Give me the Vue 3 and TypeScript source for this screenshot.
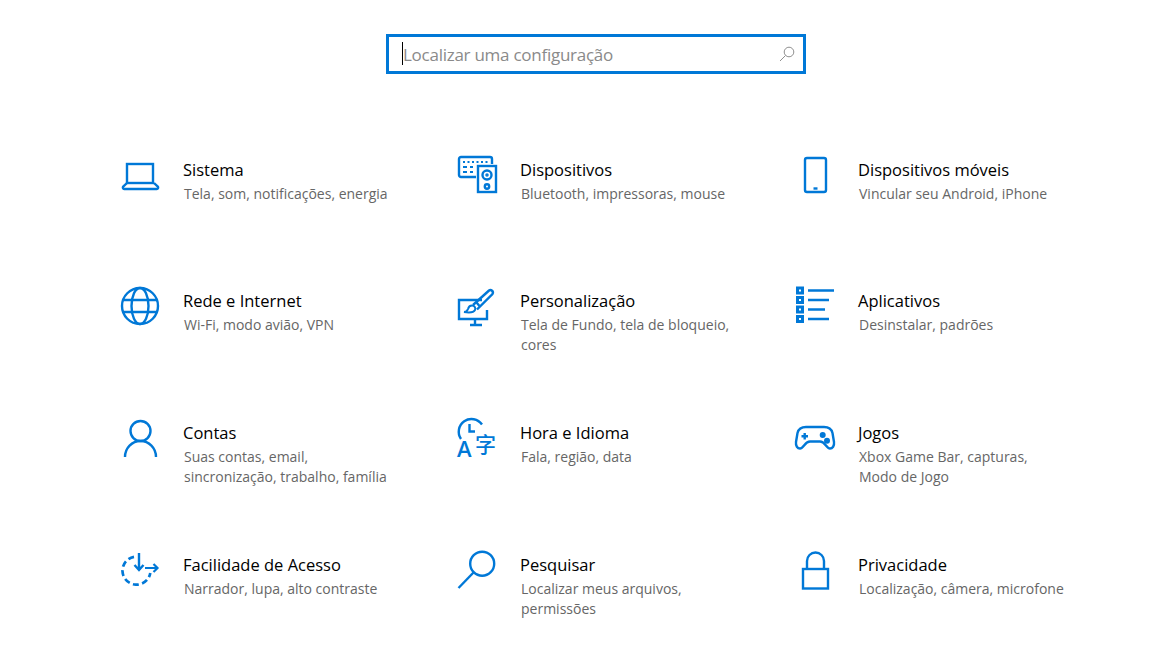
<script setup lang="ts">
interface Item { icon: string; title: string; desc: string[] }
const items: Item[] = [
  { icon: 'laptop', title: 'Sistema', desc: ['Tela, som, notificações, energia'] },
  { icon: 'devices', title: 'Dispositivos', desc: ['Bluetooth, impressoras, mouse'] },
  { icon: 'phone', title: 'Dispositivos móveis', desc: ['Vincular seu Android, iPhone'] },
  { icon: 'globe', title: 'Rede e Internet', desc: ['Wi-Fi, modo avião, VPN'] },
  { icon: 'paint', title: 'Personalização', desc: ['Tela de Fundo, tela de bloqueio,', 'cores'] },
  { icon: 'apps', title: 'Aplicativos', desc: ['Desinstalar, padrões'] },
  { icon: 'person', title: 'Contas', desc: ['Suas contas, email,', 'sincronização, trabalho, família'] },
  { icon: 'time', title: 'Hora e Idioma', desc: ['Fala, região, data'] },
  { icon: 'game', title: 'Jogos', desc: ['Xbox Game Bar, capturas,', 'Modo de Jogo'] },
  { icon: 'access', title: 'Facilidade de Acesso', desc: ['Narrador, lupa, alto contraste'] },
  { icon: 'search', title: 'Pesquisar', desc: ['Localizar meus arquivos,', 'permissões'] },
  { icon: 'lock', title: 'Privacidade', desc: ['Localização, câmera, microfone'] },
]
</script>

<template>
  <main class="page">
    <div class="search">
      <span class="caret"></span>
      <span class="placeholder">Localizar uma configuração</span>
      <svg class="search-icon" width="16" height="16" viewBox="0 0 16 16" fill="none" stroke="#8f8f8f" stroke-width="1">
        <circle cx="10" cy="6" r="4.8" />
        <path d="M6.5 9.5L1 15" />
      </svg>
    </div>
    <section class="grid">
      <article v-for="item in items" :key="item.title" class="item">
        <svg class="icon" width="46" height="46" viewBox="0 0 46 46" fill="none" stroke="#0078d7" stroke-width="2.4">
          <g v-if="item.icon === 'laptop'">
            <rect x="9" y="12" width="26" height="19" />
            <path d="M9 31L5.200 34.600C4.400 35.500 5 37 6.200 37H38.800C40 37 40.600 35.500 39.800 34.600L36 31" />
          </g>
          <g v-else-if="item.icon === 'devices'">
            <path d="M21 25H6a2 2 0 0 1-2-2V7a2 2 0 0 1 2-2H35a2 2 0 0 1 2 2V12" />
            <path d="M8 10h2M12.500 10h2M17 10h2M21.500 10h2M26 10h2M30.500 10h2M8 15h4M15 15h3M8 20h4M15 20h3" stroke-width="2" />
            <rect x="23" y="14" width="18" height="26" />
            <circle cx="32" cy="23" r="4.500" />
            <circle cx="32" cy="23" r="1" stroke-width="1.500" />
            <circle cx="32" cy="34.500" r="2.200" />
          </g>
          <g v-else-if="item.icon === 'phone'">
            <rect x="12" y="6" width="21" height="34" rx="2" />
            <path d="M20.500 36.500h4" />
          </g>
          <g v-else-if="item.icon === 'globe'" transform="translate(1 1)">
            <circle cx="21" cy="22" r="18" />
            <ellipse cx="21" cy="22" rx="8.500" ry="18" />
            <path d="M5 16H37M5 28H37" />
          </g>
          <g v-else-if="item.icon === 'paint'" transform="translate(0 1)">
            <path d="M27 16H4V35H32V26" />
            <path d="M20 35V41M15 41H27" />
            <path d="M9 28C12 28 12.500 26.500 13 25C13.500 23 15 21.500 17 21.500C19.500 21.500 21 24 20 26C19 28 15 29 9 28Z" stroke-width="2" />
            <path d="M18 21L34 6.500C36 5 39 7.500 37.500 10L22 25.500" />
            <path d="M21.500 18.500L24.500 22" />
          </g>
          <g v-else-if="item.icon === 'apps'" transform="translate(0 1)" stroke-width="3">
            <rect x="4.500" y="4" width="5" height="5" />
            <rect x="4.500" y="13.500" width="5" height="5" />
            <rect x="4.500" y="23" width="5" height="5" />
            <rect x="4.500" y="32.500" width="5" height="5" />
            <path d="M15 6.500H41M15 16H36M15 25.500H32M15 35H36" stroke-width="2.400" />
          </g>
          <g v-else-if="item.icon === 'person'">
            <circle cx="22.500" cy="16" r="10" />
            <path d="M7 42C7 33 14 26 22.500 26C31 26 38 33 38 42" />
          </g>
          <g v-else-if="item.icon === 'time'">
            <path d="M6 24A12 12 0 1 1 27 9.500" />
            <path d="M14.500 9V16.500H20" />
            <text x="2" y="42" class="glyph" font-size="22">A</text>
            <text x="20" y="37" class="glyph cjk" font-size="21">字</text>
          </g>
          <g v-else-if="item.icon === 'game'">
            <path d="M13 12H31C35.500 12 38.500 14 39.500 18L41 27C41.500 31 39.500 33.500 37 33.500C35 33.500 34 32 32.500 30C31 28 29.500 26.500 27 26.500H17C14.500 26.500 13 28 11.500 30C10 32 9 33.500 7 33.500C4.500 33.500 2.500 31 3 27L4.500 18C5.500 14 8.500 12 13 12Z" />
            <path d="M11.700 18V24.500M8.500 21.200H15" />
            <circle cx="29.700" cy="20" r="1.800" fill="#0078d7" />
            <circle cx="34" cy="25.700" r="1.800" fill="#0078d7" />
          </g>
          <g v-else-if="item.icon === 'access'">
            <path d="M16 9.900A14 14 0 1 0 32.300 26" stroke-width="2.700" stroke-dasharray="6 3.400" />
            <path d="M21 6V22M16.500 18L21 23L25.500 18" stroke-width="2.400" />
            <path d="M27 21H39.500M35.500 17L39.500 21L35.500 25" stroke-width="2.200" />
          </g>
          <g v-else-if="item.icon === 'search'">
            <circle cx="27.200" cy="16.700" r="12" />
            <path d="M18.500 25.500L3.500 41" />
          </g>
          <g v-else-if="item.icon === 'lock'">
            <rect x="10" y="22" width="25" height="19.500" />
            <path d="M14 22V14a8.500 8.500 0 0 1 17 0V22" />
          </g>
        </svg>
        <div class="text">
          <h2 class="title">{{ item.title }}</h2>
          <p v-for="line in item.desc" :key="line" class="desc">{{ line }}</p>
        </div>
      </article>
    </section>
  </main>
</template>

<style scoped>
.page {
  width: 1163px;
  height: 655px;
  overflow: hidden;
  background: #fff;
  font-family: "Open Sans", "Noto Sans", sans-serif;
}
.search {
  box-sizing: border-box;
  width: 420px;
  height: 40px;
  margin: 34px 0 0 386px;
  border: 3px solid #0078d7;
  display: flex;
  align-items: center;
  position: relative;
  padding: 0 10px 0 14px;
}
.caret {
  position: absolute;
  left: 13px;
  top: 5px;
  width: 1px;
  height: 23px;
  background: #000;
}
.placeholder {
  font-size: 17px;
  color: #8a8a8a;
  letter-spacing: -0.26px;
  flex: 1;
}
.search-icon {
  margin-right: -2px;
}
.grid {
  display: grid;
  grid-template-columns: 337px 338px 338px;
  grid-template-rows: 131px 132px 132px 132px;
  padding: 78px 0 0 118px;
}
.item {
  display: flex;
  align-items: flex-start;
}
.icon {
  flex: none;
  width: 46px;
  height: 46px;
  margin-right: 19px;
  overflow: visible;
}
.text {
  padding-top: 6px;
}
.title {
  margin: 0 0 2px;
  font-size: 16.500px;
  font-weight: 400;
  line-height: 24px;
  color: #000;
}
.desc {
  margin: 0 0 0 1px;
  font-size: 14px;
  line-height: 20px;
  color: #666;
}
.glyph {
  fill: #0078d7;
  stroke: none;
  font-family: "Open Sans", sans-serif;
  font-weight: 600;
}
.cjk {
  font-family: "Noto Sans CJK SC", sans-serif;
  font-weight: 500;
}
</style>
